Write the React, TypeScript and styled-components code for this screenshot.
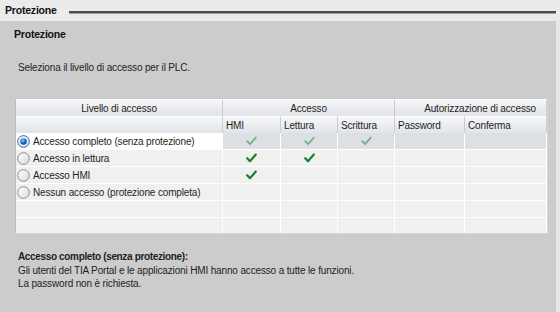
import React from "react";
import styled, { createGlobalStyle } from "styled-components";

const Global = createGlobalStyle`
  html, body { margin: 0; padding: 0; background: #e8e8e8; }
  body { font-family: "Liberation Sans", Arial, sans-serif; color: #1e1e1e; }
`;

const Page = styled.div`
  width: 560px;
  height: 312px;
  background: #ebebeb;
  display: flex;
  flex-direction: column;
  overflow: hidden;
`;

const TopBar = styled.div`
  height: 21px;
  display: flex;
  align-items: center;
  padding-left: 5px;
  box-sizing: border-box;
`;

const TopTitle = styled.span`
  font-size: 10.5px;
  font-weight: bold;
  letter-spacing: -0.2px;
  line-height: 21px;
  color: #111;
`;

const Rule = styled.div`
  flex: 1;
  height: 2px;
  margin: 3px 4px 0 12px;
  background: #4d4d4d;
  border-bottom: 1px solid #a0a0a0;
`;

const Body = styled.div`
  flex: 1;
  display: flex;
`;

const Panel = styled.div`
  width: 556px;
  background: #cccccc;
  padding: 5px 0 0 14px;
  box-sizing: border-box;
`;

const PanelTitle = styled.div`
  font-size: 10.5px;
  font-weight: bold;
  letter-spacing: -0.2px;
  line-height: 16px;
  color: #111;
`;

const Instruction = styled.div`
  font-size: 10px;
  letter-spacing: -0.15px;
  line-height: 15px;
  margin: 18px 0 0 4px;
`;

const TableClip = styled.div`
  margin: 24px 0 0 2px;
  width: 531px;
  height: 134px;
  overflow: hidden;
  box-shadow: 0 1px 0 #d6d6d6, 1px 0 0 #d6d6d6, -1px 0 0 #bdbdbd;
`;

const Grid = styled.div`
  display: grid;
  grid-template-columns: 207px 58px 57px 57px 70px 82px;
  grid-auto-rows: 17px;
  background: #f0f0f0;
`;

const HeadCell = styled.div<{ $span?: number; $align?: string }>`
  grid-column: span ${(p) => p.$span ?? 1};
  height: 18px;
  box-sizing: border-box;
  font-size: 10px;
  letter-spacing: -0.15px;
  line-height: 17px;
  text-align: ${(p) => p.$align ?? "left"};
  padding: ${(p) => (p.$align === "right" ? "0 10px 0 0" : p.$align === "center" ? "0" : "0 0 0 3px")};
  background: linear-gradient(#f7f8f9 0%, #eceef1 45%, #e1e4e8 100%);
  border-top: 1px solid #ffffff;
  border-right: 1px solid #c9ccd0;
  border-bottom: 1px solid #c4c8cd;
  white-space: nowrap;
  color: #1e1e1e;
`;

const Cell = styled.div<{ $selected?: boolean; $label?: boolean }>`
  box-sizing: border-box;
  border-right: 1px solid #ffffff;
  border-bottom: 1px solid #ffffff;
  background: ${(p) => (p.$selected ? (p.$label ? "#ffffff" : "#dcdfe3") : "#f0f0f0")};
  display: flex;
  align-items: center;
  justify-content: ${(p) => (p.$label ? "flex-start" : "center")};
  font-size: 10px;
  letter-spacing: -0.15px;
  white-space: nowrap;
  padding-left: ${(p) => (p.$label ? "1px" : "0")};
  svg { flex-shrink: 0; }
`;

const RadioLabel = styled.span`
  margin-left: 3px;
  color: #1e1e1e;
`;

const Description = styled.div`
  margin: 17px 0 0 4px;
  font-size: 10px;
  letter-spacing: -0.15px;
  line-height: 13.5px;
`;

const DescTitle = styled.div`
  font-weight: bold;
  letter-spacing: -0.35px;
`;

const RightStrip = styled.div`
  flex: 1;
  background: #e8e8e8;
`;

const Radio = ({ on }: { on: boolean }) => (
  <svg width="13" height="13" viewBox="0 0 13 13">
    <defs>
      <linearGradient id={on ? "rOn" : "rOff"} x1="0" y1="0" x2="1" y2="1">
        <stop offset="0" stopColor="#ffffff" />
        <stop offset="1" stopColor={on ? "#d8e6f3" : "#dcdcdc"} />
      </linearGradient>
      <radialGradient id="dot" cx="0.4" cy="0.35" r="0.7">
        <stop offset="0" stopColor="#8fd0ff" />
        <stop offset="0.5" stopColor="#1a78d4" />
        <stop offset="1" stopColor="#0a3f8a" />
      </radialGradient>
    </defs>
    <circle cx="6.5" cy="6.5" r="5.8" fill={`url(#${on ? "rOn" : "rOff"})`} stroke={on ? "#2f5f93" : "#8a8a8a"} strokeWidth="1" />
    {on && <circle cx="6.5" cy="6.5" r="3.3" fill="url(#dot)" />}
  </svg>
);

const Check = ({ light }: { light?: boolean }) => (
  <svg width="11" height="10" viewBox="0 0 11 10">
    <path
      d="M1.2 5.2 L4 8.2 L9.8 1.6"
      fill="none"
      stroke={light ? "#72b487" : "#1b7f2d"}
      strokeWidth={light ? 1.8 : 2.2}
      strokeLinecap="round"
      strokeLinejoin="round"
    />
  </svg>
);

type Row = { label: string; hmi: boolean; read: boolean; write: boolean };

const rows: Row[] = [
  { label: "Accesso completo (senza protezione)", hmi: true, read: true, write: true },
  { label: "Accesso in lettura", hmi: true, read: true, write: false },
  { label: "Accesso HMI", hmi: true, read: false, write: false },
  { label: "Nessun accesso (protezione completa)", hmi: false, read: false, write: false },
];

export default function App() {
  return (
    <Page>
      <Global />
      <TopBar>
        <TopTitle>Protezione</TopTitle>
        <Rule />
      </TopBar>
      <Body>
        <Panel>
          <PanelTitle>Protezione</PanelTitle>
          <Instruction>Seleziona il livello di accesso per il PLC.</Instruction>
          <TableClip>
            <Grid>
              <HeadCell $align="center">Livello di accesso</HeadCell>
              <HeadCell $span={3} $align="center">Accesso</HeadCell>
              <HeadCell $span={2} $align="right">Autorizzazione di accesso</HeadCell>
              <HeadCell />
              <HeadCell>HMI</HeadCell>
              <HeadCell>Lettura</HeadCell>
              <HeadCell>Scrittura</HeadCell>
              <HeadCell>Password</HeadCell>
              <HeadCell>Conferma</HeadCell>
              {rows.map((r, i) => {
                const sel = i === 0;
                return (
                  <React.Fragment key={r.label}>
                    <Cell $label $selected={sel}>
                      <Radio on={sel} />
                      <RadioLabel>{r.label}</RadioLabel>
                    </Cell>
                    <Cell $selected={sel}>{r.hmi && <Check light={sel} />}</Cell>
                    <Cell $selected={sel}>{r.read && <Check light={sel} />}</Cell>
                    <Cell $selected={sel}>{r.write && <Check light={sel} />}</Cell>
                    <Cell $selected={sel} />
                    <Cell $selected={sel} />
                  </React.Fragment>
                );
              })}
              {[0, 1].map((k) => (
                <React.Fragment key={k}>
                  <Cell />
                  <Cell />
                  <Cell />
                  <Cell />
                  <Cell />
                  <Cell />
                </React.Fragment>
              ))}
            </Grid>
          </TableClip>
          <Description>
            <DescTitle>Accesso completo (senza protezione):</DescTitle>
            <div>Gli utenti del TIA Portal e le applicazioni HMI hanno accesso a tutte le funzioni.</div>
            <div>La password non è richiesta.</div>
          </Description>
        </Panel>
        <RightStrip />
      </Body>
    </Page>
  );
}
